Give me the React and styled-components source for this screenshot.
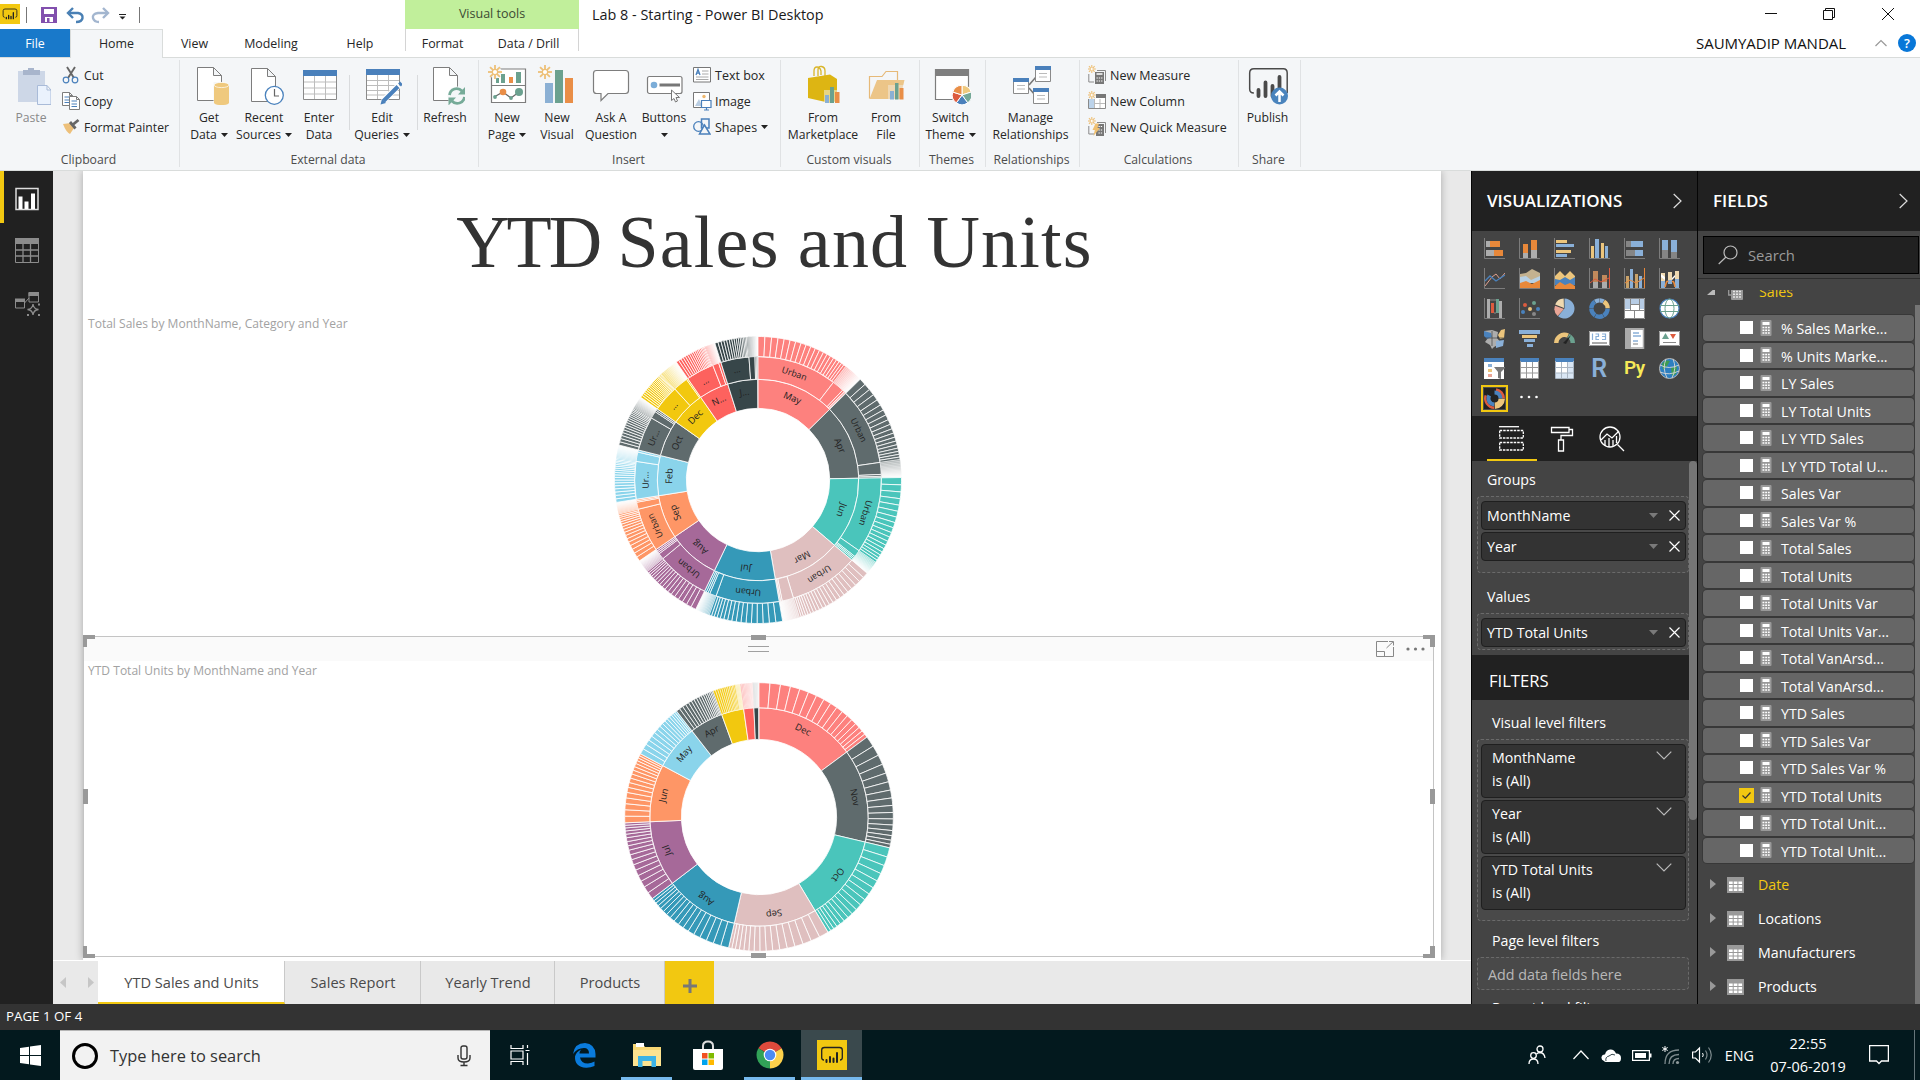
import React from "react";
import styled, { createGlobalStyle, css } from "styled-components";

const Global = createGlobalStyle`
  * { box-sizing: border-box; }
  body { margin: 0; overflow: hidden; background: #fff; }
  svg { display: block; flex: none; }
`;

const UI = `"Open Sans", "Noto Sans", sans-serif`;

/* ---------- shell ---------- */
const Shell = styled.div`
  width: 1920px;
  height: 1080px;
  display: flex;
  flex-direction: column;
  overflow: hidden;
  font-family: ${UI};
  font-size: 12.2px;
  color: #262626;
  white-space: nowrap;
`;

const TitleBar = styled.header`
  height: 29px;
  display: flex;
  background: #fff;
`;
const QuickAccess = styled.div`
  width: 405px;
  display: flex;
  align-items: center;
  padding-bottom: 1px;
`;
const ToolsCaption = styled.div`
  width: 174px;
  background: #c1ef9b;
  display: flex;
  justify-content: center;
  line-height: 27px;
  font-size: 12.5px;
  color: #3c4a33;
`;
const WindowTitle = styled.div`
  flex: 1;
  padding-left: 13px;
  font-size: 14.4px;
  line-height: 29px;
  color: #1a1a1a;
`;

const TabStrip = styled.nav`
  height: 29px;
  display: flex;
  background: #fff;
  border-bottom: 1px solid #d9dcdb;
  line-height: 29px;
`;
const tabKinds = {
  file: css`background: #1979ca; color: #fff; height: 28px;`,
  active: css`background: #f4f6f8; border: 1px solid #d9dcdb; border-bottom: 0; line-height: 28px;`,
  plain: css``,
};
const RibbonTab = styled.div`
  width: ${(p) => p.$w}px;
  height: 29px;
  text-align: center;
  font-size: 12.4px;
  ${(p) => tabKinds[p.$kind || "plain"]}
`;
const ToolTabs = styled.div`
  display: flex;
  width: 174px;
  height: 22px;
  margin-left: 1px;
  border: 1px solid #d4d4d4;
  border-width: 0 1px;
  line-height: 29px;
`;
const Account = styled.div`
  flex: 1;
  display: flex;
  align-items: center;
  justify-content: flex-end;
  padding-right: 4px;
  font-size: 15px;
  letter-spacing: -0.03px;
  color: #111;
`;
const AccountName = styled.span`
  margin-right: 29px;
`;
const Help = styled.span`
  width: 18px;
  height: 18px;
  margin-left: 11px;
  border-radius: 50%;
  background: #0877d8;
  color: #fff;
  font-size: 13px;
  font-weight: 600;
  line-height: 18px;
  text-align: center;
`;

/* ---------- ribbon ---------- */
const Ribbon = styled.section`
  height: 113px;
  display: flex;
  background: #f4f6f8;
  border-bottom: 1px solid #d9dcdb;
  padding-top: 2px;
`;
const Group = styled.div`
  width: ${(p) => p.$w}px;
  height: 107px;
  border-right: 1px solid #e0e2e4;
  display: flex;
  flex-direction: column;
`;
const GroupBody = styled.div`
  height: 91px;
  flex: none;
  display: flex;
  padding-left: ${(p) => p.$pad || 0}px;
`;
const GroupLabel = styled.div`
  flex: none;
  text-align: center;
  padding-right: 2px;
  line-height: 17px;
  color: #4c4c4c;
`;
const Big = styled.div`
  width: ${(p) => p.$w}px;
  padding-top: 5px;
  display: flex;
  flex-direction: column;
  align-items: center;
  color: ${(p) => (p.$off ? "#8a8a8a" : "#262626")};
  line-height: 17px;
`;
const BigLine = styled.span`
  display: flex;
  align-items: center;
  gap: 4px;
  height: 17px;
  &:nth-of-type(1) { margin-top: 4px; }
`;
const InnerRule = styled.div`
  width: 1px;
  height: 55px;
  margin: 15px 0 0 ${(p) => p.$l}px;
  background: #d9dbdd;
`;
const SmallList = styled.div`
  display: flex;
  flex-direction: column;
  padding: 2px 0 0 ${(p) => p.$l || 0}px;
  font-size: ${(p) => p.$size || 12.2}px;
`;
const SmallItem = styled.div`
  height: 26px;
  display: flex;
  align-items: center;
  gap: ${(p) => p.$gap || 4}px;
`;

const Caret = ({ c = "#222" }) => (
  <svg width="7" height="4" viewBox="0 0 7 4"><path d="M0 0H7L3.5 4Z" fill={c} /></svg>
);

const Art = ({ children, w = 40, h = 40 }) => (
  <svg width={w} height={h} viewBox={`0 0 ${w} ${h}`} fill="none">{children}</svg>
);
const Burst = ({ x, y, r = 7, w = 1.8 }) => (
  <g stroke="#eec077" strokeWidth={w}>
    {[0, 45, 90, 135, 180, 225, 270, 315].map((a) => (
      <line key={a} x1={x} x2={x} y1={y - r * 0.42} y2={y - r} transform={`rotate(${a} ${x} ${y})`} />
    ))}
    <circle cx={x} cy={y} r={r * 0.38} strokeWidth={w * 0.7} fill="#fff" />
  </g>
);
const Doc = ({ x, y, w, h, f = 8 }) => (
  <path d={`M${x} ${y}H${x + w - f}L${x + w} ${y + f}V${y + h}H${x}ZM${x + w - f} ${y}V${y + f}H${x + w}`} fill="#fff" stroke="#7d7d7d" />
);

const bigArt = {
  paste: (
    <Art>
      <path d="M7 6H34V37H7Z" fill="#cdd7e7" />
      <path d="M12 5H17V3H23V5H29V10H12Z" fill="#a8b5cc" />
      <path d="M26.5 20.5H36L40 25V39.5H26.5ZM36 20.5V25H40" fill="#eaf2fd" stroke="#a9bbd8" />
    </Art>
  ),
  get: (
    <Art>
      <Doc x={8.5} y={2.5} w={24} h={33} />
      <path d="M24.500 17H40V40H24.500Z" fill="#f4f6f8" />
      <path d="M25 20V37.500C25 41 40 41 40 37.500V20Z" fill="#efc97e" />
      <ellipse cx="32.500" cy="20" rx="7.500" ry="2.600" fill="#efc97e" stroke="#fff" strokeWidth=".7" />
    </Art>
  ),
  recent: (
    <Art>
      <Doc x={7.5} y={3.500} w={24} h={33} />
      <circle cx="30.300" cy="30.300" r="9" fill="#fff" stroke="#4a82bd" strokeWidth="1.300" />
      <path d="M30.500 24V31H35" stroke="#666" strokeWidth="1.200" />
    </Art>
  ),
  enter: (
    <Art>
      <path d="M4.500 5.500H37.500V34.500H4.500Z" fill="#fff" stroke="#8a8a8a" />
      <path d="M4 5H38V11H4Z" fill="#4a80bb" />
      <path d="M15.500 11V34M26.500 11V34M5 17H37M5 23H37M5 29H37" stroke="#bdbdbd" />
    </Art>
  ),
  edit: (
    <Art>
      <path d="M4.500 4.500H37.500V34.500H4.500Z" fill="#fff" stroke="#8a8a8a" />
      <path d="M4 4H38V10H4Z" fill="#4a80bb" />
      <path d="M15.500 10V34M26.500 10V34M5 15.500H37M5 20.500H37M5 25.500H37M5 30H37" stroke="#bdbdbd" />
      <path d="M21 36L37 20" stroke="#fff" strokeWidth="6" />
      <path d="M21.500 36L36 21.500M37.500 20L39.500 18" stroke="#4a80bb" strokeWidth="4" />
      <path d="M18.500 39.500L20 34L24 38Z" fill="#4a80bb" />
    </Art>
  ),
  refresh: (
    <Art>
      <Doc x={8.5} y={2.500} w={24} h={33} />
      <circle cx="32" cy="31" r="9.500" fill="#f4f6f8" />
      <path d="M24.500 30A7.200 7.200 0 0 1 37 26M39.500 32A7.200 7.200 0 0 1 27 36" stroke="#76ab98" strokeWidth="2.800" />
      <path d="M40.500 21.500V29.500H33ZM23.500 40.500V32.500H31Z" fill="#76ab98" />
    </Art>
  ),
  page: (
    <Art>
      <path d="M4.500 4H38.500V37.500H4.500ZM4.500 20.500H38.500" fill="#fff" stroke="#7d7d7d" strokeWidth="1.200" />
      <path d="M9 13H12V18H9ZM14 9H18V18H14ZM29 7H34V18H29Z" fill="#6ba18f" />
      <path d="M22 12H26V18H22Z" fill="#e98e47" />
      <path d="M7 32L16 27L24 33L32 27" stroke="#666" strokeWidth="1.300" />
      <circle cx="16" cy="27" r="3.300" fill="#e98e47" /><circle cx="32" cy="27" r="4" fill="#6ba18f" />
      <circle cx="8" cy="32" r="1.900" fill="#6ba18f" /><circle cx="24" cy="33" r="1.900" fill="#6ba18f" />
      <circle cx="8" cy="7" r="6.500" fill="#f4f6f8" />
      <Burst x={8} y={7} />
    </Art>
  ),
  visual: (
    <Art>
      <path d="M8 18H16V38H8Z" fill="#8bb0d4" /><path d="M18 5H26V38H18Z" fill="#6ba18f" /><path d="M28 13H36V38H28Z" fill="#e98e47" />
      <Burst x={8} y={7} />
    </Art>
  ),
  ask: (
    <Art>
      <path d="M5.500 5.500H34.500Q37.500 5.500 37.500 8.500V25.500Q37.500 28.500 34.500 28.500H17L10 35.500V28.500H5.500Q2.500 28.500 2.500 25.500V8.500Q2.500 5.500 5.500 5.500Z" fill="#fff" stroke="#7d7d7d" strokeWidth="1.200" />
    </Art>
  ),
  buttons: (
    <Art>
      <rect x="3.500" y="11.500" width="34.500" height="17" rx="2" fill="#fff" stroke="#7d7d7d" strokeWidth="1.200" />
      <circle cx="10" cy="20" r="3.300" fill="#7badd8" />
      <path d="M15.500 18.500H36V21.500H15.500Z" fill="#777" />
      <path d="M27.500 25V35.500L30 33.500L31.500 37L33.500 36L32 32.500H35.500Z" fill="#fff" stroke="#777" />
    </Art>
  ),
  market: (
    <Art>
      <path d="M11 11V6Q11 2 14 2T18 6V10M15 11V5Q15 1 18.500 1.500Q22 2 22 6V11" stroke="#d9b52a" strokeWidth="1.300" />
      <path d="M5 13L27 9.500L34 14V36L27 38L5 33Z" fill="#ddb513" />
      <path d="M21 25H37V39H21Z" fill="#f4f6f8" opacity=".5" />
      <path d="M22 30H26V38H22Z" fill="#8bb0d4" /><path d="M27 22H31V38H27Z" fill="#6ba18f" /><path d="M32 27H36.500V38H32Z" fill="#e98e47" />
    </Art>
  ),
  file: (
    <Art>
      <path d="M3.500 33.500V11.500H16L20 6.500H31.500V15" fill="#f4f6f8" stroke="#e6b978" strokeWidth="1.200" />
      <path d="M11 15H38.500L34 34H3.500Z" fill="#ecc588" />
      <path d="M22 20H39V35H22Z" fill="#f4f6f8" opacity=".4" />
      <path d="M24 26H28V34.500H24Z" fill="#8bb0d4" /><path d="M29 18H32.500V34.500H29Z" fill="#6ba18f" /><path d="M33.500 23H37.500V34.500H33.500Z" fill="#e98e47" />
    </Art>
  ),
  theme: (
    <Art>
      <path d="M4.500 4.500H37.500V34.500H4.500Z" fill="#fff" stroke="#7d7d7d" strokeWidth="1.200" />
      <path d="M4 4H38V11H4Z" fill="#7f7f7f" />
      <circle cx="31" cy="30" r="10.500" fill="#f4f6f8" />
      {["#efc97e", "#76a897", "#4a80bb", "#dc5b3e", "#e98e47"].map((c, i) => (
        <path key={c} d={sector(31, 30, 0, 9.7, i * 72, i * 72 + 72)} fill={c} stroke="#fff" />
      ))}
    </Art>
  ),
  manage: (
    <Art>
      <path d="M18 20L25 12M18 23L24 30" stroke="#777" strokeWidth="1.600" />
      {[[2.5, 13.5], [24.5, 1.5], [22.5, 23.5]].map(([x, y]) => (
        <g key={x}>
          <path d={`M${x} ${y}h15v15h-15Z`} fill="#fff" stroke="#8a8a8a" />
          <path d={`M${x - 0.5} ${y - 0.5}h16v4h-16Z`} fill="#4a80bb" />
          <path d={`M${x + 3.500} ${y + 7}h8M${x + 3.500} ${y + 10.500}h8`} stroke="#bbb" />
        </g>
      ))}
    </Art>
  ),
  publish: (
    <Art>
      <path d="M6 28Q1.700 28 1.700 24V8Q1.700 3.700 6 3.700H36Q40 3.700 40 8V28" stroke="#4a4a4a" strokeWidth="1.500" transform="scale(.98 1)" />
      <path d="M10.500 25V31M17.500 17.500V31M24.500 21V31M31.500 12V24" stroke="#4a4a4a" strokeWidth="3.800" strokeLinecap="round" />
      <circle cx="31.500" cy="31" r="8.500" fill="#4a84bd" />
      <path d="M31.500 37V27M27.500 30.500L31.500 26.500L35.500 30.500" stroke="#fff" strokeWidth="2.500" />
    </Art>
  ),
};

const smallArt = {
  cut: (
    <Art w={18} h={18}>
      <path d="M5 1L12 12M13 1L6 12" stroke="#666" strokeWidth="1.900" />
      <circle cx="4" cy="14" r="2.800" stroke="#4a80bb" strokeWidth="1.200" /><circle cx="13" cy="14" r="2.800" stroke="#4a80bb" strokeWidth="1.200" />
    </Art>
  ),
  copy: (
    <Art w={18} h={18}>
      <Doc x={0.5} y={0.5} w={10} h={13} f={3} />
      <path d="M2.500 5H8M2.500 8H8M2.500 10.500H8" stroke="#4a80bb" />
      <Doc x={7.5} y={4.500} w={10} h={13} f={3} />
      <path d="M9.500 9H15M9.500 12H15M9.500 14.500H15" stroke="#4a80bb" />
    </Art>
  ),
  painter: (
    <Art w={18} h={18}>
      <path d="M1 6L9 5L12 10L8 16Q4 14 1 6Z" fill="#edc07a" />
      <path d="M8 4L13.500 10.500M11 6.500L16.500 2" stroke="#666" strokeWidth="2.800" />
    </Art>
  ),
  text: (
    <Art w={18} h={18}>
      <path d="M.5 1.500H17.500V16H.5Z" fill="#fff" stroke="#777" />
      <path d="M3 9L5 3.500L7 9M3.800 7.200H6.500" stroke="#4a80bb" strokeWidth="1.300" />
      <path d="M9 5H15.500M9 8H15.500M3 11H15.500M3 13.500H15.500" stroke="#aaa" />
    </Art>
  ),
  image: (
    <Art w={19} h={19}>
      <path d="M.5.5H16.500V15.500H.5Z" fill="#fff" stroke="#777" />
      <path d="M2 14L6 7L9 14Z" fill="#b9cde2" /><circle cx="11" cy="4.500" r="1.700" fill="#efb76c" />
      <path d="M8.500 8.500H18V15.500H8.500ZM11 18H16M13.500 15V18" fill="#fff" stroke="#4a80bb" strokeWidth="1.200" />
    </Art>
  ),
  shapes: (
    <Art w={18} h={18}>
      <circle cx="5.500" cy="8.500" r="4.800" stroke="#4a80bb" strokeWidth="1.300" />
      <path d="M8.500 1H16V10H8.500Z" stroke="#4a80bb" strokeWidth="1.500" />
      <path d="M11.500 7L17 16H6.500Z" fill="#f4f6f8" stroke="#4a80bb" strokeWidth="1.500" />
    </Art>
  ),
  measure: (
    <Art w={18} h={20}>
      <path d="M.8 9V17H6M9 5.500H17.500V16" stroke="#8a8a8a" />
      <path d="M7 7H16V19H7Z" fill="#777" />
      <path d="M8.500 9H14.500" stroke="#fff" strokeWidth="1.500" /><path d="M8.500 13H15M8.500 16H15" stroke="#fff" strokeWidth="1.200" strokeDasharray="1.300 1" />
      <Burst x={3.8} y={4} r={4} w={1.100} />
    </Art>
  ),
  column: (
    <Art w={18} h={20}>
      <path d="M.5 3.500H17.500V17.500H.5Z" fill="#fff" stroke="#8a8a8a" />
      <path d="M1 8H6V17H1Z" fill="#bcd3ea" /><path d="M1 3H18V7H1Z" fill="#777" />
      <path d="M6.500 8V17M12 8V17M6.500 12.500H17" stroke="#bbb" />
      <path d="M0 0H8V8H0Z" fill="#f4f6f8" /><Burst x={3.800} y={4} r={4} w={1.100} />
    </Art>
  ),
  quick: (
    <Art w={18} h={20}>
      <path d="M.8 9V17H6M9 5.500H17.500V16" stroke="#8a8a8a" />
      <path d="M8 7H16V19H8Z" fill="#777" />
      <path d="M10.500 9.500H14.500M10.500 13H15M10.500 16H15" stroke="#fff" strokeWidth="1.200" strokeDasharray="1.300 1" />
      <path d="M7.500 6.500H11L9.500 11H12L5.500 19L6.800 13H4.500Z" fill="#efbf6f" />
      <Burst x={3.800} y={4} r={4} w={1.100} />
    </Art>
  ),
};

function BigButton({ art, w, lines, caret, off }) {
  return (
    <Big $w={w} $off={off}>
      {bigArt[art]}
      {lines.map((l, i) => (
        <BigLine key={i}>{l}{caret && i === lines.length - 1 && <Caret />}</BigLine>
      ))}
    </Big>
  );
}

/* ---------- sunbursts ---------- */
function pt(cx, cy, r, a) {
  const t = (a * Math.PI) / 180;
  return `${(cx + r * Math.sin(t)).toFixed(2)} ${(cy - r * Math.cos(t)).toFixed(2)}`;
}
function sector(cx, cy, r0, r1, a0, a1) {
  const big = a1 - a0 > 180 ? 1 : 0;
  return `M${pt(cx, cy, r1, a0)}A${r1} ${r1} 0 ${big} 1 ${pt(cx, cy, r1, a1)}L${pt(cx, cy, r0, a1)}${r0 ? `A${r0} ${r0} 0 ${big} 0 ${pt(cx, cy, r0, a0)}` : ""}Z`;
}
function taper(a0, a1, n, ratio) {
  const ws = Array.from({ length: n }, (_, i) => 1 + (ratio - 1) * (1 - i / (n - 1 || 1)));
  const total = ws.reduce((s, v) => s + v, 0);
  let a = a0;
  return ws.map((v) => {
    const s = a;
    a += (v / total) * (a1 - a0);
    return [s, a];
  });
}

// [end angle, colour, month label, [category ends], category label, leaf count]
const salesRing = [
  [45.4, "#fd817e", "May", [37.7, 43.3, 44.3, 44.9], "Urban", 20],
  [89, "#5f6b6d", "Apr", [81.8, 87.4, 88.3], "Urban", 19],
  [130.5, "#4ac5bb", "Jun", [125, 128.3, 129, 129.7], "Urban", 18],
  [170.1, "#dfbfbf", "Mar", [163.3, 168.7, 169.5], "Urban", 21],
  [205.7, "#3599b8", "Jul", [199.9, 203, 203.9, 204.8], "Urban", 16],
  [235.7, "#a66999", "Aug", [230.4, 233.3, 234.1, 234.9], "Urban", 17],
  [261, "#fe9666", "Sep", [256.3, 259.6, 260.3], "Urban", 16],
  [284.1, "#8ad4eb", "Feb", [278.7, 283.1], "Ur...", 18],
  [305.2, "#5f6b6d", "Oct", [300.2, 303.6, 304.4], "Ur...", 17],
  [325.3, "#f2c80f", "Dec", [317.6, 324.6], "...", 19],
  [342.5, "#fd625e", "N...", [338.5, 341.4], "...", 17],
  [359.8, "#374649", "J...", [355.8, 358.6, 359.2], "...", 15],
];
const unitsRing = [
  [53.5, "#fd817e", "Dec", 17, 1],
  [103.3, "#5f6b6d", "Nov", 16, 1],
  [149.1, "#4ac5bb", "Oct", 17, 1],
  [193.1, "#dfbfbf", "Sep", 16, 1],
  [232.6, "#3599b8", "Aug", 17, 1],
  [267.5, "#a66999", "Jul", 17, 1],
  [298.1, "#fe9666", "Jun", 16, 1],
  [322.1, "#8ad4eb", "May", 15, 1],
  [340, "#5f6b6d", "Apr", 16, 1],
  [351.9, "#f2c80f", "", 17, 0.6],
  [357.3, "#fd625e", "", 13, 0.4],
  [359.8, "#374649", "", 9, 0.2],
];
const leafOpacity = (strength, t) => {
  if (strength === 1) return 1;
  if (strength > 0.5) return t < 0.65 ? 1 : 0.45;
  return strength * (1.3 - 0.6 * t);
};

const ArcLabel = styled.text`
  font-family: ${UI};
  font-size: ${(p) => p.$size}px;
  fill: #222;
  text-anchor: middle;
`;
const RingLabel = ({ c, r, a, size, children }) => (
  <ArcLabel $size={size} transform={`translate(${pt(c, c, r, a)}) rotate(${a})`} dy=".35em">{children}</ArcLabel>
);

function SalesSunburst() {
  const c = 144;
  let start = 0;
  return (
    <svg width="288" height="288" viewBox="0 0 288 288">
      {salesRing.map(([end, color, name, cats, cat, n]) => {
        const a0 = start;
        start = end;
        const edges = [a0, ...cats, end];
        return (
          <g key={name} fill={color} stroke="#fff" strokeWidth=".8">
            <path d={sector(c, c, 71.7, 100.7, a0, end)} />
            {edges.slice(1).map((e, i) => <path key={e} d={sector(c, c, 100.7, 123.4, edges[i], e)} />)}
            {taper(a0, cats[0], n, 2.8).map(([s, e]) => <path key={s} d={sector(c, c, 123.400, 143.5, s, e)} />)}
            {taper(cats[0], end, 14, 2).map(([s, e], i) => (
              <path key={s} d={sector(c, c, 123.400, 143.5, s, e)} strokeWidth=".3" opacity={0.5 * Math.pow(1 - i / 14, 1.5)} />
            ))}
            <g stroke="none">
              <RingLabel c={c} r={89} a={(a0 + end) / 2} size={9.3}>{name}</RingLabel>
              <RingLabel c={c} r={112.5} a={(a0 + cats[0]) / 2} size={8.9}>{cat}</RingLabel>
            </g>
          </g>
        );
      })}
    </svg>
  );
}

function UnitsSunburst() {
  const c = 135;
  let start = 0;
  return (
    <svg width="270" height="270" viewBox="0 0 270 270">
      {unitsRing.map(([end, color, name, n, strength]) => {
        const a0 = start;
        start = end;
        return (
          <g key={end} fill={color} stroke="#fff" strokeWidth=".8">
            <path d={sector(c, c, 77.6, 109.2, a0, end)} />
            {taper(a0, end, n, 3).map(([s, e], i) => (
              <path key={s} d={sector(c, c, 109.2, 134.3, s, e)} strokeWidth={strength < 1 ? 0.5 : 0.8} opacity={leafOpacity(strength, i / n)} />
            ))}
            <g stroke="none">{name && <RingLabel c={c} r={98} a={(a0 + end) / 2} size={9.3}>{name}</RingLabel>}</g>
          </g>
        );
      })}
    </svg>
  );
}

/* ---------- workspace ---------- */
const Work = styled.main`
  height: 833px;
  display: flex;
`;
const Rail = styled.aside`
  width: 53px;
  background: #212121;
  display: flex;
  flex-direction: column;
`;
const RailItem = styled.div`
  height: ${(p) => p.$h}px;
  padding-left: ${(p) => (p.$on ? 11 : 15)}px;
  border-left: ${(p) => (p.$on ? "4px solid #f2c811" : "0")};
  padding-top: ${(p) => (p.$on ? 3 : 0)}px;
  display: flex;
  align-items: center;
`;
const Center = styled.section`
  width: 1418px;
  display: flex;
  flex-direction: column;
  background: #e9e9e9;
`;
const Stage = styled.div`
  height: 790px;
  padding: 0 30px;
  overflow: hidden;
  border-bottom: 1px solid #fff;
`;
const Page = styled.div`
  position: relative;
  height: 789px;
  background: #fff;
  box-shadow: 0 0 8px rgba(0, 0, 0, 0.28);
  display: flex;
  flex-direction: column;
`;
const Headline = styled.h1`
  margin: 0;
  height: 144px;
  padding: 29px 0 0 25px;
  text-align: center;
  font: 400 74px/84px "Liberation Serif", Georgia, serif;
  letter-spacing: 1.2px;
  word-spacing: -1.5px;
  color: #333;
`;
const Acronym = styled.span`
  letter-spacing: -3px;
`;
const Visual = styled.div`
  height: 320px;
  display: flex;
  flex-direction: column;
`;
const VisualTitle = styled.div`
  padding-left: ${(p) => p.$l || 5}px;
  height: 18px;
  font-size: 12.05px;
  line-height: ${(p) => p.$lh || 18}px;
  color: #a2a2a2;
`;
const Plot = styled.div`
  display: flex;
  justify-content: center;
  padding-right: ${(p) => p.$r}px;
  margin-top: 3px;
`;
const Selected = styled.div`
  position: relative;
  margin: 1px 7px 0 0;
  height: 321px;
  border: 1px solid #c4c4c4;
  display: flex;
  flex-direction: column;
`;
const VisualHeader = styled.div`
  height: 24px;
  flex: none;
  background: #fafafa;
  display: flex;
  align-items: center;
  justify-content: space-between;
  padding: 0 8px 0 664px;
`;
const Grip = styled.span`
  width: 21px;
  height: 6px;
  border: solid #a0a0a0;
  border-width: 1px 0;
`;
const HeaderTools = styled.span`
  display: flex;
  align-items: center;
  gap: 12px;
`;
const Corner = styled.i`
  position: absolute;
  width: 12px;
  height: 12px;
  border: 0 solid #999;
  ${(p) => (p.$v === "t" ? "top: -2px; border-top-width: 4px;" : "bottom: -2px; border-bottom-width: 4px;")}
  ${(p) => (p.$h === "l" ? "left: -1px; border-left-width: 4px;" : "right: -2px; border-right-width: 5px;")}
`;
const Knob = styled.i`
  position: absolute;
  background: #999;
  ${(p) => (p.$side === "t" || p.$side === "b" ? "width: 15px; height: 5px; left: 667px;" : "width: 5px; height: 15px; top: 152px;")}
  ${(p) => ({ t: "top: -2px;", b: "bottom: -2px;", l: "left: -1px;", r: "right: -2px;" })[p.$side]}
`;

const PageTabs = styled.div`
  height: 43px;
  display: flex;
  font-size: 14.6px;
  line-height: 43px;
  color: #4a4a4a;
`;
const Pager = styled.div`
  width: 45px;
  display: flex;
  align-items: center;
  justify-content: space-between;
  padding: 0 4px 0 7px;
`;
const PageTab = styled.div`
  width: ${(p) => p.$w}px;
  padding-left: 1px;
  text-align: center;
  border-right: 1px solid #c9c9c9;
  ${(p) => p.$on && "background: #fff; border-bottom: 2px solid #f2c811;"}
`;
const AddPage = styled.div`
  width: 49px;
  background: #f2c811;
  display: flex;
  align-items: center;
  justify-content: center;
  padding-top: 6px;
`;

/* ---------- side panes ---------- */
const Pane = styled.section`
  width: ${(p) => p.$w}px;
  border-left: 1px solid #050505;
  background: #444;
  color: #fff;
  font-size: 14.2px;
  display: flex;
  flex-direction: column;
  overflow: hidden;
`;
const PaneHead = styled.div`
  height: 60px;
  flex: none;
  background: #212121;
  display: flex;
  align-items: center;
  justify-content: space-between;
  padding: 0 ${(p) => p.$r}px 1px 15px;
  font-size: 17px;
  font-weight: 600;
`;
const VizGrid = styled.div`
  height: 185px;
  flex: none;
  display: grid;
  grid-template-columns: repeat(6, 35px);
  grid-auto-rows: 30px;
  padding: 7px 0 0 12px;
`;
const Chosen = styled.div`
  width: 27px;
  height: 27px;
  margin: -3px 0 0 -3px;
  border: 2px solid #f2c811;
  outline: 1px solid #fff3;
  outline-offset: -3px;
  background: #222;
  display: flex;
  align-items: center;
  justify-content: center;
`;
const Modes = styled.div`
  height: 45px;
  flex: none;
  display: flex;
  background: #212121;
  padding-left: 15px;
`;
const Mode = styled.div`
  width: 50px;
  display: flex;
  justify-content: center;
  padding: 10px 1px 0 0;
  border-bottom: ${(p) => (p.$on ? "2px solid #f2c811" : "0")};
`;
const Scroller = styled.div`
  display: flex;
  height: 543px;
`;
const Wells = styled.div`
  width: 217px;
  display: flex;
  flex-direction: column;
  overflow: hidden;
`;
const Track = styled.div`
  width: 8px;
  height: 359px;
  background: #767676;
  border-radius: 4px;
`;
const WellTitle = styled.div`
  height: ${(p) => p.$h}px;
  flex: none;
  padding-left: ${(p) => p.$l || 15}px;
  line-height: ${(p) => p.$lh || p.$h}px;
`;
const Well = styled.div`
  height: ${(p) => p.$h}px;
  flex: none;
  margin: 0 0 0 5px;
  width: 212px;
  padding: 4px 2px 0 3px;
  border: 1px dashed #6a6a6a;
  border-radius: 4px;
  background: #494949;
  display: flex;
  flex-direction: column;
  gap: 2px;
`;
const Chip = styled.div`
  height: 29px;
  flex: none;
  background: #333;
  border: 1px solid #1f1f1f;
  border-radius: 4px;
  display: flex;
  align-items: center;
  padding: 0 5px;
  line-height: 27px;
`;
const ChipName = styled.span`
  flex: 1;
`;
const ChipTools = styled.span`
  display: flex;
  align-items: center;
  gap: 11px;
`;
const FilterHead = styled.div`
  height: 45px;
  flex: none;
  width: 225px;
  margin-top: 5px;
  padding: 0 0 0 17px;
  background: #212121;
  font-size: 16.6px;
  font-weight: 500;
  line-height: 51px;
`;
const FilterCard = styled.div`
  height: 54px;
  flex: none;
  background: #333;
  border: 1px solid #1f1f1f;
  border-radius: 4px;
  display: flex;
  justify-content: space-between;
  padding: 1px 13px 0 10px;
  line-height: 23px;
`;
const CardArrow = styled.span`
  padding-top: 5px;
`;
const DropHint = styled.div`
  height: 33px;
  flex: none;
  width: 212px;
  margin-left: 5px;
  padding-left: 10px;
  border: 1px dashed #6a6a6a;
  border-radius: 4px;
  background: #494949;
  color: #b8b8b8;
  font-size: 14.3px;
  line-height: 33px;
`;

const SearchBox = styled.div`
  height: 38px;
  flex: none;
  margin: 5px 1px 0 5px;
  border: 1px solid #000;
  background: #212121;
  color: #9a9a9a;
  font-size: 14.8px;
  display: flex;
  align-items: center;
  gap: 10px;
  padding: 0 14px 0 14px;
`;
const FieldScroll = styled.div`
  margin-top: 4px;
  border-top: 1px solid #2c2c2c;
  flex: 1;
  display: flex;
  overflow: hidden;
`;
const FieldList = styled.div`
  width: 217px;
  padding: 11px 0 0 5px;
`;
const FieldTrack = styled.div`
  width: 5px;
  margin-top: 26px;
  background: #757575;
`;
const TableClip = styled.div`
  height: 25px;
  overflow: hidden;
`;
const TableRow = styled.div`
  height: 34px;
  display: flex;
  align-items: center;
  color: ${(p) => (p.$hot ? "#f2c811" : "#fff")};
  padding-left: ${(p) => p.$l || 7}px;
  margin-top: ${(p) => p.$t || 0}px;
`;
const TableIcon = styled.span`
  width: 17px;
  margin: 2px 14px 0 ${(p) => p.$l || 11}px;
`;
const FieldRow = styled.div`
  height: 27.5px;
  padding-bottom: 2px;
`;
const FieldCell = styled.div`
  height: 25.5px;
  border-radius: 4px;
  background: #666;
  box-shadow: 0 0 0 1px #383838;
  width: 211px;
  display: flex;
  align-items: center;
  padding-left: 37px;
`;
const Check = styled.span`
  width: ${(p) => (p.$on ? 15 : 13)}px;
  height: ${(p) => (p.$on ? 15 : 13)}px;
  margin: 0 ${(p) => (p.$on ? 6 : 7)}px 0 ${(p) => (p.$on ? -1 : 0)}px;
  background: ${(p) => (p.$on ? "#f2c811" : "#fff")};
  display: flex;
  align-items: center;
  justify-content: center;
`;
const FieldName = styled.span`
  margin-left: 9px;
  padding-top: 2px;
`;

const Angle = ({ w = 8, h = 14, d, c = "#ddd" }) => (
  <svg width={w} height={h} viewBox={`0 0 ${w} ${h}`} fill="none"><path d={d} stroke={c} strokeWidth="1.200" /></svg>
);
const HeadArrow = () => <Angle w={9} h={16} d="M.7 1L8 8L.7 15" />;
const Calc = () => (
  <svg width="12" height="16" viewBox="0 0 12 16"><rect x=".5" width="11" height="16" rx="1" fill="#999" /><path d="M2.500 3.500H9.500" stroke="#fff" strokeWidth="3" /><path d="M2.500 7.500H10M2.500 10.200H10M2.500 12.900H10" stroke="#fff" strokeWidth="1.500" strokeDasharray="1.800 .9" /></svg>
);
const TableGlyph = () => (
  <svg width="17" height="16" viewBox="0 0 17 16"><rect width="17" height="16" fill="#999" /><path d="M2 5.800H16M2 9.300H16M2 12.800H16" stroke="#fff" strokeWidth="2.400" strokeDasharray="3.700 1" /></svg>
);
const MeasureTable = () => (
  <svg width="15" height="16" viewBox="0 0 15 16" fill="none"><path d="M.7 0V11H3M3 .7H14" stroke="#999" strokeWidth="1.300" /><rect x="3" y="1" width="12" height="15" rx="1" fill="#999" /><path d="M5 4H13" stroke="#fff" strokeWidth="2" /><path d="M5 7.500H13.500M5 10.200H13.500M5 12.900H13.500" stroke="#e5e5e5" strokeWidth="1.500" strokeDasharray="2 1" /></svg>
);

const V = ({ children, axis }) => (
  <svg width="21" height="21" viewBox="0 0 21 21" fill="none">
    {axis && <path d="M.5 0V20.500H21" stroke="#7c7c7c" />}
    {children}
  </svg>
);
const F = ({ d, c }) => <path d={d} fill={c} />;
const L = ({ d, c, w = 1 }) => <path d={d} stroke={c} strokeWidth={w} />;
const OR = "#e8883a", GR = "#adadad", BL = "#8ab0d8", YE = "#ecc57c", DB = "#4a82bd", GN = "#6ba18f", RD = "#dc5b3e";

const vizIcons = [
  <V axis><F c={GR} d="M2 3H6V9H2ZM2 12H10V18H2Z" /><F c={OR} d="M6 3H16V9H6ZM10 12H19V18H10Z" /></V>,
  <V axis><F c={OR} d="M4 6H9V15H4ZM12 2H18V12H12Z" /><F c={GR} d="M4 15H9V20H4ZM12 12H18V20H12Z" /></V>,
  <V axis><F c={YE} d="M2 2H13V5H2ZM2 12H17V15H2Z" /><F c={BL} d="M2 6H20V9H2ZM2 16H13V19H2Z" /></V>,
  <V axis><F c={YE} d="M2 8H5V20H2ZM12 5H15V20H12Z" /><F c={BL} d="M6 1H10V20H6ZM16 8H19V20H16Z" /></V>,
  <V axis><F c="#858585" d="M2 3H7V9H2ZM2 12H11V18H2Z" /><F c={BL} d="M7 3H19V9H7ZM11 12H19V18H11Z" /></V>,
  <V axis><F c={BL} d="M3 2H9V12H3ZM12 2H18V14H12Z" /><F c="#858585" d="M3 12H9V20H3ZM12 14H18V20H12Z" /></V>,
  <V axis><L c="#e0a08e" d="M1 18L8 9L12 6L16 11L21 5" /><L c={DB} w={1.300} d="M1 13L6 8L12 13L21 7" /></V>,
  <V axis><F c="#c4b290" d="M1 6L7 5L13 1L21 5V12H1Z" /><F c="#b7d0e4" d="M1 9L7 8L12 12L21 8V15H1Z" /><F c={OR} d="M1 15L7 13L13 16L21 12V20H1Z" /></V>,
  <V axis><F c={YE} d="M1 8L6 3L11 8L16 3L21 8V12H1Z" /><F c={DB} d="M1 11L6 12L11 9L16 12L21 9V17H1Z" /><F c={OR} d="M1 18L6 14L11 17L16 15L21 18V21H1Z" /></V>,
  <V axis><F c="#c08a5c" d="M4 3H9V20H4ZM13 7H18V20H13Z" /><F c={GR} d="M4 14H9V20H4ZM13 14H18V20H13Z" /><L c={RD} d="M1 15L6 11L12 14L20 10M20.500 0V20" /></V>,
  <V axis><F c="#c9a269" d="M2 8H5V20H2ZM11 6H14V20H11Z" /><F c={BL} d="M6 1H9V20H6ZM15 8H18V20H15Z" /><L c={OR} d="M1 15L6 12L12 15L20 10M20.500 0V20" /></V>,
  <V axis><F c="#efd9b0" d="M2 5H6V13H2ZM9 4H13V12H9ZM16 3H20V11H16Z" /><F c={BL} d="M2 13H6V20H2ZM9 12H13V16H9ZM16 11H20V20H16Z" /><F c="#fff" d="M2 6L6 9V12L2 9ZM13 10L16 7V9L13 12Z" /><L c={OR} w={1.600} d="M6 19Q8 11 9 14M13 14Q15 12 16 19" /></V>,
  <V axis><F c={GR} d="M3 1H6V20H3ZM15 3H18V20H15Z" /><F c={RD} d="M7 5H10V15H7Z" /><F c={GN} d="M12 1H15V15H12Z" /><L c="#888" d="M6 2H12M10 15H12" /></V>,
  <V axis><circle cx="6" cy="7" r="2" fill={RD} /><circle cx="15" cy="5" r="2" fill={GN} /><circle cx="11" cy="11" r="2" fill={YE} /><circle cx="19" cy="11" r="2" fill={DB} /><circle cx="4" cy="14" r="2" fill={DB} /><circle cx="15" cy="16" r="2" fill="#888" /></V>,
  <V><F c={BL} d={sector(10.500, 10.500, 0, 10, 0, 220)} /><F c="#e9a596" d={sector(10, 11, 0, 9.500, 222, 290)} /><F c="#efd9b0" d={sector(10, 10, 0, 9.500, 292, 358)} /></V>,
  <V>{[[2, 30, BL], [32, 88, YE], [91, 150, DB], [153, 210, DB], [213, 270, DB], [273, 325, DB], [328, 360, BL]].map(([a, b, c]) => <F key={a} c={c} d={sector(10.5, 10.5, 6, 10.3, a, b)} />)}</V>,
  <V><F c="#fff" d="M0 0H21V21H0Z" /><F c="#b7cce4" d="M1 1H6V11H1ZM7 1H15V6H7ZM16 1H20V11H16Z" /><L c="#888" d="M.5.5H20.500V20.500H.5ZM0 12.500H21M6.500 0V12M6.500 6.500H16M15.500 0V12M10.500 12V20" /></V>,
  <V><circle cx="10.500" cy="10.500" r="9.500" fill="#fff" stroke={DB} strokeWidth="1.200" /><ellipse cx="10.500" cy="10.500" rx="4.500" ry="9.500" stroke={GN} /><L c={GN} d="M1 7.500H20M1 13.500H20" /></V>,
  <V><F c={GR} d="M0 3L8 2L14 4L13 10L17 15L10 19L8 21L6 17L1 14L4 10Z" /><F c={DB} d="M0 3L7 5L8 9L3 11L0 8Z" /><F c={YE} d="M17 2L21 1L20 10L16 11L14 7Z" /><F c={BL} d="M12 13L20 12L19 18L12 20Z" /><L c="#444" d="M1 10H20M8 3V18" w={.7} /></V>,
  <V><F c={BL} d="M0 2H21V6H0Z" /><F c={YE} d="M3 7H18V10H3Z" /><F c={BL} d="M5 11H16V14H5ZM8 16H14V19H8Z" /></V>,
  <V><F c={YE} d={sector(10.5, 15, 6, 10.5, -90, 25)} /><F c={GN} d={sector(10.5, 15, 6, 10.5, 28, 90)} /><F c="#222" d="M9 15L17 7L12 16Z" /></V>,
  <V><F c="#fff" d="M0 3H21V18H0Z" /><L c="#999" d="M.5 3.500H20.500V17.500H.5Z" /><L c={BL} d="M3.500 5.500V12M6.500 6H9.500V8.500H7V11.500H10M13 6H16.500V11.500H13M13 8.500H16" w={1.200} /><L c="#555" d="M3 15H18" /></V>,
  <V><F c="#fff" d="M1 0H20V21H1Z" /><F c="#aaa" d="M1 0H20V2H1ZM1 2H7V21H1Z" /><L c={BL} w={1.500} d="M9 5H15M9 8H17M9 13H14" /><L c="#aaa" w={1.500} d="M1 20H20M19.500 0V21M9 16H14" /></V>,
  <V><F c="#fff" d="M0 3H21V18H0Z" /><L c="#999" d="M.5 3.500H20.500V17.500H.5Z" /><F c={GN} d="M3 11L6.500 5L10 11Z" /><F c={RD} d="M11 6H17L14 11Z" /><L c="#888" d="M4 14.500H17" /></V>,
  <V><F c="#fff" d="M0 0H20V21H0Z" /><F c={DB} d="M0 0H20V4H0Z" /><F c={BL} d="M4 6H8V9H4Z" /><F c={YE} d="M4 11H8V14H4Z" /><F c="#e9a596" d="M4 16H8V19H4Z" /><F c="#777" d="M10 9H22L17 14V21L14 20V14Z" /></V>,
  <V><F c="#fff" d="M1 1H20V20H1Z" /><F c={DB} d="M1 0H20V4H1Z" /><L c="#999" d="M1.500 3V20.500H19.500V3M7.500 4V20M13.500 4V20M1 9.500H20M1 15H20" /></V>,
  <V><F c="#d9e6f4" d="M1 1H20V20H1Z" /><F c={DB} d="M1 0H20V4H1Z" /><F c="#fff" d="M1 4H13V15H1Z" /><L c="#a9b5c2" d="M1.500 3V20.500H19.500V3M7.500 4V20M13.500 4V20M1 9.500H20M1 15H20" /></V>,
  "R",
  "Py",
  <V><circle cx="10.500" cy="10.500" r="10" fill="#2d7fc1" stroke="#bbb" /><F c="#3f9b52" d="M3 6Q6 1 11 3L8 8L4 12ZM12 10L18 8L17 16L13 18Z" /><path d="M1 7Q10 12 20 7M1 14Q10 18 20 13M7 1Q3 10 8 20M14 1Q18 10 13 20" stroke="#d8d8d8" strokeWidth=".9" /></V>,
];
const ScriptMark = styled.span`
  width: 20px;
  text-align: center;
  font-size: ${(p) => (p.$py ? 19 : 25)}px;
  font-weight: 600;
  letter-spacing: -0.5px;
  line-height: ${(p) => (p.$py ? 19 : 22)}px;
  font-family: "Roboto", sans-serif;
  color: ${(p) => (p.$py ? "#f7ea58" : "#8ab0d8")};
`;

const fieldNames = ["% Sales Marke...", "% Units Marke...", "LY Sales", "LY Total Units", "LY YTD Sales", "LY YTD Total U...", "Sales Var", "Sales Var %", "Total Sales", "Total Units", "Total Units Var", "Total Units Var...", "Total VanArsd...", "Total VanArsd...", "YTD Sales", "YTD Sales Var", "YTD Sales Var %", "YTD Total Units", "YTD Total Unit...", "YTD Total Unit..."];

const WellChip = ({ name }) => (
  <Chip>
    <ChipName>{name}</ChipName>
    <ChipTools>
      <svg width="9" height="5" viewBox="0 0 9 5"><path d="M0 0H9L4.500 5Z" fill="#7a7a7a" /></svg>
      <Angle w={11} h={11} c="#fff" d="M.5.5L10.500 10.500M10.500.5L.5 10.500" />
    </ChipTools>
  </Chip>
);

/* ---------- status and taskbar ---------- */
const Status = styled.footer`
  height: 26px;
  background: #333;
  color: #fff;
  font-size: 13.3px;
  line-height: 25px;
  padding-left: 6px;
`;
const Taskbar = styled.footer`
  height: 50px;
  display: flex;
  background: #03191e;
  color: #fff;
`;
const Start = styled.div`
  width: 60px;
  display: flex;
  align-items: center;
  justify-content: center;
`;
const SearchField = styled.div`
  width: 430px;
  background: #f2f2f2;
  border-top: 1px solid #b5b5b5;
  color: #333;
  font-size: 16.4px;
  display: flex;
  align-items: center;
  padding: 0 18px 0 12px;
`;
const SearchHint = styled.span`
  flex: 1;
  padding-left: 12px;
`;
const TaskApp = styled.div`
  width: ${(p) => p.$w}px;
  display: flex;
  align-items: center;
  justify-content: center;
  border-bottom: 3px solid ${(p) => (p.$run ? "#76b9ed" : "transparent")};
  border-top: 3px solid transparent;
  margin: 0 ${(p) => p.$m || 0}px;
  ${(p) => p.$front && "background: #3a494d; margin-left: 1px;"}
`;
const Tray = styled.div`
  flex: 1;
  display: flex;
  align-items: center;
  justify-content: flex-end;
  font-size: 14.4px;
`;
const TrayItem = styled.span`
  margin-right: ${(p) => p.$r}px;
`;
const Clock = styled.div`
  width: 90px;
  margin-right: 16px;
  text-align: center;
  line-height: 23px;
  font-size: 14.500px;
`;
const PeekEdge = styled.div`
  width: 6px;
  height: 50px;
  border-left: 1px solid #66757a;
`;

const PbiMark = ({ s }) => (
  <svg width={s} height={s} viewBox="0 0 30 30" fill="none">
    <path d="M0 0H30V30H0Z" fill="#f2c811" />
    <path d="M7 20Q4.700 20 4.700 17.500V10Q4.700 7.500 7.500 7.500H22.500Q25.300 7.500 25.300 10V17.500Q25.300 20 23 20" stroke="#222" strokeWidth="1.300" />
    <path d="M9.500 20V22M13 17V22M16.500 18.500V22M20 13V22" stroke="#222" strokeWidth="2" strokeLinecap="round" />
  </svg>
);

export default function App() {
  return (
    <Shell>
      <Global />
      <TitleBar>
        <QuickAccess>
          <PbiMark s={20} />
          <svg width="125" height="20" viewBox="20 4 125 20" fill="none">
            <path d="M26.500 7V23M139.500 7V23" stroke="#777" />
            <path d="M41 7H57V23H41Z" fill="#8250ae" /><path d="M44 9H54V14H44ZM45 17H53V22H45Z" fill="#fff" /><path d="M47 18H49.500V22H47Z" fill="#8250ae" />
            <path d="M68 13H78Q83 14 82.500 18T76 22" stroke="#4a80b4" strokeWidth="2.400" /><path d="M73 8L68 13L73 18" stroke="#4a80b4" strokeWidth="2.400" />
            <path d="M108 13H98Q92 14 93 18T99 22" stroke="#a3b6cf" strokeWidth="2.400" /><path d="M103 8L108 13L103 18" stroke="#a3b6cf" strokeWidth="2.400" />
            <path d="M119 14.500H126" stroke="#222" /><path d="M119.500 16.500H125.500L122.500 19.500Z" fill="#222" />
          </svg>
        </QuickAccess>
        <ToolsCaption>Visual tools</ToolsCaption>
        <WindowTitle>Lab 8 - Starting - Power BI Desktop</WindowTitle>
        <svg width="160" height="29" viewBox="1760 0 160 29" fill="none" stroke="#111">
          <path d="M1765 13.500H1777M1823.500 10.500H1832.500V19.500H1823.500ZM1825.500 10V8.500H1834.500V17.500H1833M1882 8L1894 20M1894 8L1882 20" />
        </svg>
      </TitleBar>
      <TabStrip>
        <RibbonTab $kind="file" $w={70}>File</RibbonTab>
        <RibbonTab $kind="active" $w={93}>Home</RibbonTab>
        <RibbonTab $w={63}>View</RibbonTab>
        <RibbonTab $w={90}>Modeling</RibbonTab>
        <RibbonTab $w={88}>Help</RibbonTab>
        <ToolTabs>
          <RibbonTab $w={74}>Format</RibbonTab>
          <RibbonTab $w={100}>Data / Drill</RibbonTab>
        </ToolTabs>
        <Account>
          <AccountName>SAUMYADIP MANDAL</AccountName>
          <Angle w={12} h={8} c="#999" d="M.5 7L6 1.500L11.500 7" />
          <Help>?</Help>
        </Account>
      </TabStrip>
      <Ribbon>
        <Group $w={180}>
          <GroupBody>
            <BigButton art="paste" w={62} lines={["Paste"]} off />
            <SmallList>
              <SmallItem>{smallArt.cut}Cut</SmallItem>
              <SmallItem>{smallArt.copy}Copy</SmallItem>
              <SmallItem>{smallArt.painter}Format Painter</SmallItem>
            </SmallList>
          </GroupBody>
          <GroupLabel>Clipboard</GroupLabel>
        </Group>
        <Group $w={299}>
          <GroupBody $pad={2}>
            <BigButton art="get" w={54} lines={["Get", "Data"]} caret />
            <BigButton art="recent" w={56} lines={["Recent", "Sources"]} caret />
            <BigButton art="enter" w={54} lines={["Enter", "Data"]} />
            <InnerRule $l={3} />
            <BigButton art="edit" w={64} lines={["Edit", "Queries"]} caret />
            <InnerRule $l={3} />
            <BigButton art="refresh" w={54} lines={["Refresh"]} />
          </GroupBody>
          <GroupLabel>External data</GroupLabel>
        </Group>
        <Group $w={302}>
          <GroupBody $pad={3}>
            <BigButton art="page" w={50} lines={["New", "Page"]} caret />
            <BigButton art="visual" w={50} lines={["New", "Visual"]} />
            <BigButton art="ask" w={58} lines={["Ask A", "Question"]} />
            <BigButton art="buttons" w={48} lines={["Buttons", ""]} caret />
            <SmallList $l={5} $size={12.5}>
              <SmallItem>{smallArt.text}Text box</SmallItem>
              <SmallItem $gap={3}>{smallArt.image}Image</SmallItem>
              <SmallItem>{smallArt.shapes}Shapes <Caret /></SmallItem>
            </SmallList>
          </GroupBody>
          <GroupLabel>Insert</GroupLabel>
        </Group>
        <Group $w={139}>
          <GroupBody $pad={3}>
            <BigButton art="market" w={78} lines={["From", "Marketplace"]} />
            <BigButton art="file" w={48} lines={["From", "File"]} />
          </GroupBody>
          <GroupLabel>Custom visuals</GroupLabel>
        </Group>
        <Group $w={66}>
          <GroupBody><BigButton art="theme" w={61} lines={["Switch", "Theme"]} caret /></GroupBody>
          <GroupLabel>Themes</GroupLabel>
        </Group>
        <Group $w={94}>
          <GroupBody><BigButton art="manage" w={89} lines={["Manage", "Relationships"]} /></GroupBody>
          <GroupLabel>Relationships</GroupLabel>
        </Group>
        <Group $w={159}>
          <GroupBody>
            <SmallList $l={8} $size={12.5}>
              <SmallItem>{smallArt.measure}New Measure</SmallItem>
              <SmallItem>{smallArt.column}New Column</SmallItem>
              <SmallItem>{smallArt.quick}New Quick Measure</SmallItem>
            </SmallList>
          </GroupBody>
          <GroupLabel>Calculations</GroupLabel>
        </Group>
        <Group $w={62}>
          <GroupBody><BigButton art="publish" w={57} lines={["Publish"]} /></GroupBody>
          <GroupLabel>Share</GroupLabel>
        </Group>
      </Ribbon>

      <Work>
        <Rail>
          <RailItem $h={52} $on>
            <svg width="24" height="24" viewBox="0 0 24 24" fill="none"><path d="M1 1.500H23V22.500H1Z" stroke="#ddd" strokeWidth="1.500" /><path d="M5.500 22V9.500M11.500 22V14.500M18 22V6.500" stroke="#fff" strokeWidth="4" /></svg>
          </RailItem>
          <RailItem $h={55}>
            <svg width="24" height="25" viewBox="0 0 24 25" fill="none"><path d="M.5.5H23.500V24.500H.5Z" stroke="#8c8c8c" /><path d="M0 0H24V6H0Z" fill="#8c8c8c" /><path d="M8 6V24M15.500 6V24M0 12H24M0 18H24" stroke="#8c8c8c" strokeWidth="1.300" /></svg>
          </RailItem>
          <RailItem $h={52}>
            <svg width="25" height="24" viewBox="0 0 25 24" fill="none"><path d="M.5 7.500H9.500V16H.5ZM14 1H23.500V10H14ZM9.500 11L14 6" stroke="#8c8c8c" /><path d="M0 6.500H10V10H0ZM13.500 0H24V4H13.500Z" fill="#8c8c8c" /><path d="M18 12Q18.500 17 23.500 17.500Q18.500 18 18 23Q17.500 18 12.500 17.500Q17.500 17 18 12Z" stroke="#8c8c8c" strokeWidth="1.300" /><path d="M12 23h2M23 23h2M23 12.500h2" stroke="#8c8c8c" strokeWidth="2" /></svg>
          </RailItem>
        </Rail>

        <Center>
          <Stage>
            <Page>
              <Headline><Acronym>YTD</Acronym> Sales and Units</Headline>
              <Visual>
                <VisualTitle>Total Sales by MonthName, Category and Year</VisualTitle>
                <Plot $r={8}><SalesSunburst /></Plot>
              </Visual>
              <Selected>
                <VisualHeader>
                  <Grip />
                  <HeaderTools>
                    <svg width="18" height="16" viewBox="0 0 18 16" fill="none" stroke="#888"><path d="M12 .5H.5V15.500H17.500V6M.5 10.500H8.500V15.500M10.500 7L17 .8M13 .5H17.500V4.500" /></svg>
                    <svg width="19" height="4" viewBox="0 0 19 4" fill="#777"><circle cx="2" cy="2" r="1.600" /><circle cx="9.500" cy="2" r="1.600" /><circle cx="17" cy="2" r="1.600" /></svg>
                  </HeaderTools>
                </VisualHeader>
                <VisualTitle $l={4} $lh={20}>YTD Total Units by MonthName and Year</VisualTitle>
                <Plot $r={0}><UnitsSunburst /></Plot>
                <Corner $v="t" $h="l" /><Corner $v="t" $h="r" /><Corner $v="b" $h="l" /><Corner $v="b" $h="r" />
                <Knob $side="t" /><Knob $side="b" /><Knob $side="l" /><Knob $side="r" />
              </Selected>
            </Page>
          </Stage>
          <PageTabs>
            <Pager>
              <svg width="6" height="11" viewBox="0 0 6 11"><path d="M6 0V11L0 5.500Z" fill="#c6c6c6" /></svg>
              <svg width="6" height="11" viewBox="0 0 6 11"><path d="M0 0V11L6 5.500Z" fill="#c6c6c6" /></svg>
            </Pager>
            <PageTab $w={187} $on>YTD Sales and Units</PageTab>
            <PageTab $w={136}>Sales Report</PageTab>
            <PageTab $w={134}>Yearly Trend</PageTab>
            <PageTab $w={110}>Products</PageTab>
            <AddPage><svg width="14" height="14" viewBox="0 0 14 14"><path d="M5.500 0H8.500V5.500H14V8.500H8.500V14H5.500V8.500H0V5.500H5.500Z" fill="#777" /></svg></AddPage>
          </PageTabs>
        </Center>

        <Pane $w={226}>
          <PaneHead $r={15}>VISUALIZATIONS<HeadArrow /></PaneHead>
          <VizGrid>
            {vizIcons.map((v, i) => (typeof v === "string" ? <ScriptMark key={i} $py={v === "Py"}>{v}</ScriptMark> : <React.Fragment key={i}>{v}</React.Fragment>))}
            <Chosen>
              <V><F c={RD} d={sector(10.5, 10.5, 7.500, 10.5, 10, 90)} /><F c={DB} d={sector(10.5, 10.5, 4, 8, 0, 90)} /><F c={YE} d={sector(10.5, 10.5, 4, 10.5, 92, 178)} /><F c={RD} d={sector(10.5, 10.5, 8, 10.5, 182, 290)} /><F c={DB} d={sector(10.5, 10.5, 4, 8, 182, 300)} /></V>
            </Chosen>
            <svg width="21" height="21" viewBox="0 0 21 21" fill="#fff"><circle cx="2.500" cy="9" r="1.300" /><circle cx="10" cy="9" r="1.300" /><circle cx="17.500" cy="9" r="1.300" /></svg>
          </VizGrid>
          <Modes>
            <Mode $on>
              <svg width="25" height="25" viewBox="0 0 25 25" fill="none" stroke="#fff"><path d="M0 .7H20" strokeWidth="1.300" /><path d="M.7 4.500H24.300V12H.7ZM.7 16.500H24.300V24H.7Z" strokeWidth="1.300" strokeDasharray="2.500 1" /></svg>
            </Mode>
            <Mode>
              <svg width="24" height="26" viewBox="0 0 24 26" fill="none" stroke="#fff" strokeWidth="1.300"><path d="M1.500 1.500H19V6.500H1.500ZM19 3.500H22.500V9.500H11V14M8.500 14H13.500V25H8.500Z" /></svg>
            </Mode>
            <Mode>
              <svg width="26" height="26" viewBox="0 0 26 26" fill="none" stroke="#fff" strokeWidth="1.300"><circle cx="11" cy="11" r="10" /><path d="M18.500 18.500L25 25M2 14L8 8L13 12L20 5M6 20V14M10 21V12M14 20V14M17.500 17V10" /></svg>
            </Mode>
          </Modes>
          <Scroller>
            <Wells>
              <WellTitle $h={35} $lh={38}>Groups</WellTitle>
              <Well $h={77}><WellChip name="MonthName" /><WellChip name="Year" /></Well>
              <WellTitle $h={40} $lh={48}>Values</WellTitle>
              <Well $h={37}><WellChip name="YTD Total Units" /></Well>
              <FilterHead>FILTERS</FilterHead>
              <WellTitle $h={39} $lh={46} $l={20}>Visual level filters</WellTitle>
              <Well $h={182}>
                {["MonthName", "Year", "YTD Total Units"].map((n) => (
                  <FilterCard key={n}>
                    <div>{n}<br />is (All)</div>
                    <CardArrow>
                      <svg width="16" height="9" viewBox="0 0 16 9" fill="none"><path d="M.7.7L8 8L15.300.7" stroke="#bbb" strokeWidth="1.200" /></svg>
                    </CardArrow>
                  </FilterCard>
                ))}
              </Well>
              <WellTitle $h={36} $lh={40} $l={20}>Page level filters</WellTitle>
              <DropHint>Add data fields here</DropHint>
              <WellTitle $h={36} $lh={36} $l={20}>Report level filters</WellTitle>
            </Wells>
            <Track />
          </Scroller>
        </Pane>

        <Pane $w={223}>
          <PaneHead $r={12}>FIELDS<HeadArrow /></PaneHead>
          <SearchBox>
            <svg width="20" height="20" viewBox="0 0 20 20" fill="none" stroke="#bbb" strokeWidth="1.200"><circle cx="12.500" cy="7.500" r="6.500" /><path d="M8 12L.7 19" /></svg>
            Search
          </SearchBox>
          <FieldScroll>
            <FieldList>
              <TableClip>
                <TableRow $hot $l={4} $t={-16}>
                  <svg width="8" height="7" viewBox="0 0 8 7"><path d="M8 0V7H0Z" fill="#bbb" /></svg>
                  <TableIcon $l={13}><MeasureTable /></TableIcon>
                  Sales
                </TableRow>
              </TableClip>
              {fieldNames.map((n, i) => (
                <FieldRow key={i}>
                  <FieldCell>
                    <Check $on={i === 17}>{i === 17 && <Angle w={9} h={7} c="#333" d="M.5 3.500L3.300 6.200L8.500.5" />}</Check>
                    <Calc />
                    <FieldName>{n}</FieldName>
                  </FieldCell>
                </FieldRow>
              ))}
              {["Date", "Locations", "Manufacturers", "Products"].map((n, i) => (
                <TableRow key={n} $hot={i === 0} $t={i === 0 ? 2 : 0}>
                  <svg width="6" height="10" viewBox="0 0 6 10"><path d="M0 0L6 5L0 10Z" fill="#999" /></svg>
                  <TableIcon><TableGlyph /></TableIcon>
                  {n}
                </TableRow>
              ))}
            </FieldList>
            <FieldTrack />
          </FieldScroll>
        </Pane>
      </Work>

      <Status>PAGE 1 OF 4</Status>
      <Taskbar>
        <Start>
          <svg width="21" height="21" viewBox="0 0 21 21"><path d="M0 3L9 1.700V10H0ZM10 1.500L21 0V10H10ZM0 11H9V19.300L0 18ZM10 11H21V21L10 19.500Z" fill="#fff" /></svg>
        </Start>
        <SearchField>
          <svg width="26" height="28" viewBox="0 0 26 28"><circle cx="13" cy="14" r="11.500" fill="none" stroke="#000" strokeWidth="3" /></svg>
          <SearchHint>Type here to search</SearchHint>
          <svg width="16" height="22" viewBox="0 0 16 22" fill="none" stroke="#333" strokeWidth="1.400"><rect x="5" y="1" width="6" height="13" rx="2" /><path d="M2 10V13Q2 17 8 17T14 13V10M8 17V20.500M4.500 20.500H11.500" /></svg>
        </SearchField>
        <TaskApp $w={60}>
          <svg width="20" height="20" viewBox="0 0 20 20" fill="none" stroke="#fff" strokeWidth="1.200"><path d="M1 0V3.500H13V0M1 20V16.500H13V20M1 6H13V14H1ZM17.500 0V3M17.500 8V20M15.500 5.500H19.500" /></svg>
        </TaskApp>
        <TaskApp $w={51} $m={8}>
          <svg width="24" height="26" viewBox="0 0 24 26"><path d="M1 12Q2.500 1 13 1Q23 2 23.500 12V15.500H8Q9 21.500 16 21.500Q20 21 22.500 19.500V24Q18 26 14 25.800Q2.500 25 3 14.500Q4 10 9 7.500Q7.500 9.500 7.500 11.500H17Q17 6 12 6Q5 6 1 12Z" fill="#0a7bdc" /></svg>
        </TaskApp>
        <TaskApp $w={51} $run $m={4}>
          <svg width="28" height="24" viewBox="0 0 28 24"><path d="M0 1H10L12 4H28V23H0Z" fill="#f7d774" /><path d="M3 0H11V4H3Z" fill="#fff" /><path d="M0 7H28V23H0Z" fill="#fde390" /><path d="M5 13H23V24H18.500V18H9.500V24H5Z" fill="#3cb3e6" /></svg>
        </TaskApp>
        <TaskApp $w={51} $m={6}>
          <svg width="30" height="30" viewBox="0 0 30 30"><path d="M10 11V6Q10 1.500 15 1.500T20 6V11" fill="none" stroke="#ddd" strokeWidth="2" /><path d="M0 9H30V28Q30 30 28 30H2Q0 30 0 28Z" fill="#fff" /><path d="M9 13H14.500V18.500H9Z" fill="#f25022" /><path d="M15.500 13H21V18.500H15.500Z" fill="#7fba00" /><path d="M9 19.500H14.500V25H9Z" fill="#00a4ef" /><path d="M15.500 19.500H21V25H15.500Z" fill="#ffb900" /></svg>
        </TaskApp>
        <TaskApp $w={51} $run $m={5}>
          <svg width="28" height="28" viewBox="0 0 28 28">
            <path d={sector(14, 14, 0, 13.5, -60, 60)} fill="#df4a3c" /><path d={sector(14, 14, 0, 13.5, 60, 180)} fill="#fdd14b" /><path d={sector(14, 14, 0, 13.5, 180, 300)} fill="#31a257" />
            <circle cx="14" cy="14" r="6.300" fill="#fff" /><circle cx="14" cy="14" r="5.200" fill="#4c8bf5" />
          </svg>
        </TaskApp>
        <TaskApp $w={61} $run $front><PbiMark s={30} /></TaskApp>
        <Tray>
          <TrayItem $r={27}><svg width="18" height="20" viewBox="0 0 18 20" fill="none" stroke="#fff" strokeWidth="1.300"><circle cx="12" cy="4" r="3" /><circle cx="5.500" cy="10.500" r="2.800" /><path d="M1 19Q1 14 5.500 14T10 19M8.500 9Q10 7.500 12 7.500Q16.500 8 17 13" /></svg></TrayItem>
          <TrayItem $r={12}><Angle w={16} h={10} c="#fff" d="M.5 9L8 1L15.500 9" /></TrayItem>
          <TrayItem $r={11}><svg width="20" height="13" viewBox="0 0 20 13"><path d="M3 12Q0 11 .5 8T4 5.500Q5 1 9 .5T15 4.500Q20 4.500 20 9T17 13H5Q3.500 13 3 12Z" fill="#fff" /><path d="M5 12Q4 8 8 7Q11 4 14 6" fill="none" stroke="#03191e" strokeWidth=".8" /></svg></TrayItem>
          <TrayItem $r={10}><svg width="20" height="11" viewBox="0 0 20 11" fill="none"><path d="M.6.6H17.400V10.400H.6Z" stroke="#fff" strokeWidth="1.200" /><path d="M3 3H14V8H3ZM18 3.500H19.500V7.500H18Z" fill="#fff" /></svg></TrayItem>
          <TrayItem $r={12}><svg width="18" height="19" viewBox="0 0 18 19" fill="none"><path d="M3 0V6M.3 1.500L5.700 4.500M5.700 1.500L.3 4.500" stroke="#fff" /><path d="M3 18Q3 4 17 4M7 18Q7 8.500 17 8.500M11 18Q11 12.500 17 12.500" stroke="#7f8c8f" strokeWidth="1.300" /><circle cx="15.500" cy="16.500" r="1.600" fill="#8c989a" /></svg></TrayItem>
          <TrayItem $r={12}><svg width="21" height="18" viewBox="0 0 21 18" fill="none"><path d="M.6 6H3.500L7.500 2V16L3.500 12H.6Z" stroke="#fff" strokeWidth="1.200" /><path d="M10.500 7Q12 9 10.500 11" stroke="#fff" /><path d="M13.500 4.500Q16.500 9 13.500 13.500M16.500 1.500Q22 9 16.500 16.500" stroke="#7f8c8f" strokeWidth="1.200" /></svg></TrayItem>
          <TrayItem $r={9}>ENG</TrayItem>
          <Clock>22:55<br />07-06-2019</Clock>
          <TrayItem $r={25}><svg width="20" height="20" viewBox="0 0 20 20" fill="none"><path d="M.6.6H19.400V16H12.500L10 18.500L7.500 16H.6Z" stroke="#fff" strokeWidth="1.300" /></svg></TrayItem>
          <PeekEdge />
        </Tray>
      </Taskbar>
    </Shell>
  );
}
